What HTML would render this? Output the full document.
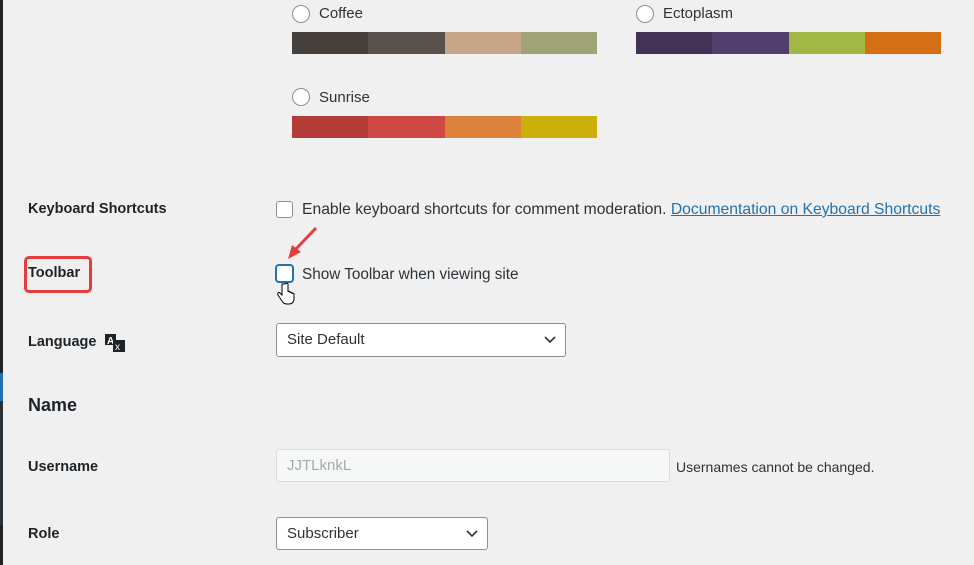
<!DOCTYPE html>
<html><head><style>
body{margin:0;width:974px;height:565px;background:#f0f0f1;font-family:"Liberation Sans",sans-serif;color:#1d2327;position:relative;overflow:hidden}
.a{position:absolute}
.lbl{position:absolute;left:28px;font-size:14.5px;font-weight:bold;color:#1d2327}
.t{position:absolute;font-size:14px;color:#2c3338}
.radio{position:absolute;width:16px;height:16px;border:1px solid #8c8f94;border-radius:50%;background:#fff}
.sw{position:absolute;height:22px;display:flex}
.sw div{width:76.25px;height:22px}
.cb{position:absolute;width:15px;height:15px;border:1px solid #8c8f94;border-radius:3px;background:#fff}
.sel{position:absolute;background:#fff;border:1px solid #8c8f94;border-radius:3px;box-sizing:border-box;font-size:15px;color:#2c3338;padding-left:10px;line-height:32px}
.sel svg{position:absolute;right:9px;top:12px}
</style></head><body>
<div class="a" style="left:0;top:0;width:3px;height:565px;background:#1d2327"></div>
<div class="a" style="left:0;top:400px;width:3px;height:125px;background:#2c3338"></div>
<div class="a" style="left:0;top:373px;width:3px;height:28px;background:#2271b1"></div>

<div class="radio" style="left:292px;top:5px"></div><div class="t" style="left:319px;top:5px;font-size:15px">Coffee</div>
<div class="sw" style="left:292px;top:32px"><div style="background:#46403c"></div><div style="background:#59524c"></div><div style="background:#c7a589"></div><div style="background:#9ea476"></div></div>
<div class="radio" style="left:636px;top:5px"></div><div class="t" style="left:663px;top:5px;font-size:15px">Ectoplasm</div>
<div class="sw" style="left:636px;top:32px"><div style="background:#413256"></div><div style="background:#523f6d"></div><div style="background:#a3b745"></div><div style="background:#d46f15"></div></div>
<div class="radio" style="left:292px;top:88px"></div><div class="t" style="left:319px;top:89px;font-size:15px">Sunrise</div>
<div class="sw" style="left:292px;top:116px"><div style="background:#b43c38"></div><div style="background:#cf4944"></div><div style="background:#dd823b"></div><div style="background:#ccaf0b"></div></div>

<div class="lbl" style="top:201px">Keyboard Shortcuts</div>
<div class="cb" style="left:276px;top:201px"></div>
<div class="t" style="left:302px;top:201px;font-size:15.7px">Enable keyboard shortcuts for comment moderation. <span style="color:#2271b1;text-decoration:underline">Documentation on Keyboard Shortcuts</span></div>

<div class="a" style="left:24px;top:256px;width:62px;height:31px;border:3px solid #e43d3d;border-radius:5px"></div>
<div class="lbl" style="top:265px">Toolbar</div>
<div class="cb" style="left:275px;top:264px;width:15px;height:15px;border:2px solid #2271b1;border-radius:4px"></div>
<div class="t" style="left:302px;top:266px;font-size:15.3px">Show Toolbar when viewing site</div>
<svg class="a" style="left:286px;top:225px" width="34" height="36"><line x1="30" y1="3" x2="9" y2="25" stroke="#e43d3d" stroke-width="3"/><polygon points="2,34 6,20 15,27" fill="#e43d3d"/></svg>
<svg class="a" style="left:277px;top:282px" width="18" height="24"><path d="M5 2v11l-2-2c-1-1-3 0-2 2l4 6c1 2 3 3 5 3h2c3 0 5-2 5-5v-5c0-1-2-1-2 0v-1c0-1-2-1-2 0v-1c0-1-2-1-2 0V2c0-1-3-1-3 0z" fill="#fff" stroke="#000" stroke-width="1"/></svg>

<div class="lbl" style="top:334px">Language</div>
<svg class="a" style="left:103px;top:332px" width="23" height="21"><path d="M2 2h11v11H2z" fill="#1d2327"/><text x="4" y="12" font-size="10" font-weight="bold" fill="#fff" font-family="Liberation Sans">A</text><rect x="10" y="8" width="12" height="12" fill="#1d2327"/><text x="12" y="18" font-size="10" fill="#fff" font-family="Liberation Sans">x</text></svg>
<div class="sel" style="left:276px;top:323px;width:290px;height:34px">Site Default<svg width="12" height="8"><path d="M1 1l5 5 5-5" fill="none" stroke="#2c3338" stroke-width="1.6"/></svg></div>

<div class="a" style="left:28px;top:395px;font-size:18px;font-weight:bold;color:#1d2327">Name</div>

<div class="lbl" style="top:459px;font-weight:bold">Username</div>
<div class="sel" style="left:276px;top:449px;width:394px;height:33px;background:#f6f7f7;border-color:#dcdcde;color:#a7aaad">JJTLknkL</div>
<div class="t" style="left:676px;top:459px;font-size:14px;color:#2c3338">Usernames cannot be changed.</div>

<div class="lbl" style="top:526px">Role</div>
<div class="sel" style="left:276px;top:517px;width:212px;height:33px">Subscriber<svg width="12" height="8"><path d="M1 1l5 5 5-5" fill="none" stroke="#2c3338" stroke-width="1.6"/></svg></div>
</body></html>
